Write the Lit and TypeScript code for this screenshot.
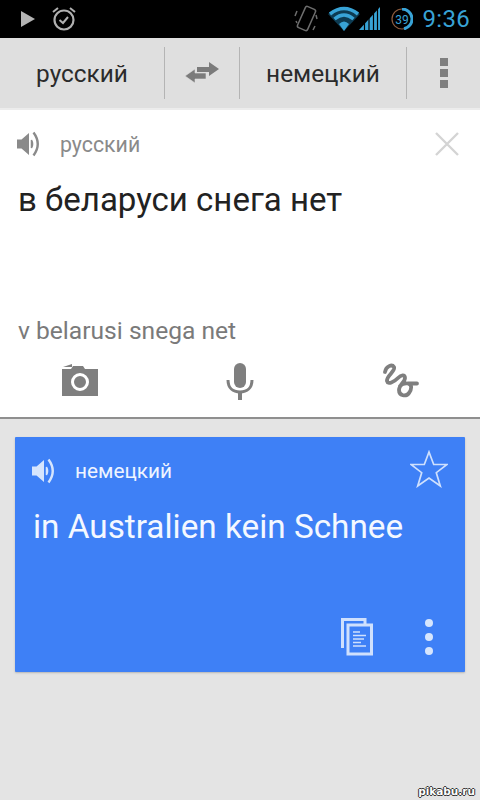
import { LitElement, html, css, svg } from "lit";
import { customElement } from "lit/decorators.js";

const speaker = (c: string) => svg`<svg class="spk" width="26" height="26" viewBox="0 0 26 26"><path d="M1 8.500h4.500L13 2v22l-7.500-6.500H1z" fill="${c}"/><path d="M15.500 9q2.200 4 0 8z" fill="${c}" stroke="${c}" stroke-width="1.500"/><path d="M17.500 1.500q8.500 11.500 0 23" fill="none" stroke="${c}" stroke-width="2.400"/></svg>`;

@customElement("app-root")
export class AppRoot extends LitElement {
  static styles = css`
    :host { display: block; width: 480px; height: 800px; position: relative; overflow: hidden; background: #e4e4e4; font-family: Roboto, "Noto Sans", sans-serif; }
    svg { display: block; flex: none; }
    .status { height: 38px; background: #000; display: flex; align-items: center; padding: 0 10px 0 20px; }
    .status .right { margin-left: auto; display: flex; align-items: center; }
    .clock { color: #38a3d6; font-size: 24px; font-family: Roboto, sans-serif; margin-left: 10px; letter-spacing: .3px; }
    .toolbar { height: 70px; background: #dfdfdf; display: grid; grid-template-columns: 165px 75px 167px 73px; align-items: center; border-bottom: 2px solid #ececec; }
    .tb { height: 52px; display: flex; align-items: center; justify-content: center; border-right: 1px solid #b4b4b4; color: #2b2b2b; font-size: 24.400px; }
    .tb.last { border-right: none; }
    .input { height: 307px; background: #fff; border-bottom: 2px solid #8f8f8f; display: flex; flex-direction: column; padding: 0 18px; box-sizing: content-box; position: relative; }
    .langrow { display: flex; align-items: center; height: 26px; margin-top: 21px; margin-left: -2px; }
    .lang { font-size: 21.300px; color: #8a8a8a; margin-left: 18px; }
    .close { margin-left: auto; margin-right: 2px; }
    .src { font-size: 33px; color: #222; line-height: 38px; margin-top: 24px; }
    .trans { font-size: 24.600px; color: #7a7a7a; line-height: 28px; margin-top: 98px; }
    .tools { display: grid; grid-template-columns: repeat(3, 1fr); margin: 18px -18px 0; justify-items: center; }
    .card { margin: 18px 15px 0; height: 235px; background: #3e80f6; border-radius: 1px; box-shadow: 0 1px 2px #b5b5b5; color: #fff; padding: 0 18px; box-sizing: border-box; display: flex; flex-direction: column; }
    .card .langrow { margin-top: 21px; margin-left: -2px; }
    .card .lang { color: #eef4ff; font-size: 20.800px; margin-left: 18px; }
    .star { margin-left: auto; margin-right: -1px; margin-top: -4px; }
    .dst { font-size: 33.300px; line-height: 38px; margin-top: 24px; color: #f4f8ff; }
    .actions { margin-top: auto; margin-bottom: 16px; display: flex; justify-content: flex-end; align-items: center; gap: 52px; margin-right: 14px; }
    .dots { display: flex; flex-direction: column; gap: 6px; }
    .dots i { width: 8px; height: 8px; border-radius: 50%; background: #d6e5fd; display: block; }
    .mark { position: absolute; right: 5px; bottom: 3px; color: #fff; font-family: "DejaVu Sans", sans-serif; font-size: 10.500px; font-weight: bold; text-shadow: -1px 0 #333, 1px 0 #333, 0 -1px #333, 0 1px #333; }
  `;

  render() {
    return html`
      <div class="status">
        <svg width="16" height="18" viewBox="0 0 16 18"><path d="M1 1l14 8-14 8z" fill="#b4b4b4"/></svg>
        <svg style="margin-left:15px" width="26" height="26" viewBox="0 0 26 26" fill="none" stroke="#b0b0b0"><circle cx="13" cy="14" r="9.500" stroke-width="2.200"/><path d="M8.500 14l3.500 3 5-6" stroke-width="2"/><path d="M2 6l5-4M24 6l-5-4" stroke-width="2"/></svg>
        <div class="right">
          <svg width="24" height="32" viewBox="0 0 24 32" fill="none" stroke="#6e6e6e" stroke-width="1.500"><rect x="7" y="4" width="11" height="23" rx="2" transform="rotate(24 12.500 15.500)"/><path d="M3 8l-2 5M2 18l1 2M22 12l1 4M19 27l2-4"/></svg>
          <svg style="margin-left:10px" width="32" height="26" viewBox="0 0 32 26"><path d="M0 8Q16-5 32 8L16 25z" fill="#0d3b52"/><path d="M2 8Q16-3 30 8" fill="none" stroke="#38a3d6" stroke-width="3.500"/><path d="M6.500 13Q16 5 25.500 13" fill="none" stroke="#38a3d6" stroke-width="3.500"/><path d="M11 18Q16 13 21 18L16 25z" fill="#38a3d6"/></svg>
          <svg width="22" height="26" viewBox="0 0 22 26" style="margin-left:-1px"><path d="M0 24L21 1v23z" fill="#38a3d6"/><path d="M5.500 24v-8M10 24V10M14.500 24V5M18.500 24V2" stroke="#000" stroke-width="1.200"/></svg>
          <svg style="margin-left:10px" width="22" height="22" viewBox="0 0 22 22"><circle cx="11" cy="11" r="10" fill="none" stroke="#8b5b3e" stroke-width="1.200"/><path d="M11 1a10 10 0 0 1 2 19.800" fill="none" stroke="#38a3d6" stroke-width="3"/><text x="11" y="15.500" text-anchor="middle" font-size="12" fill="#38a3d6" font-family="Roboto">39</text></svg>
          <span class="clock">9:36</span>
        </div>
      </div>
      <div class="toolbar">
        <div class="tb">русский</div>
        <div class="tb"><svg width="36" height="24" viewBox="0 0 36 24"><path d="M13 6h12V1l10 7-10 7v-4H13z" fill="#7b7b7b"/><path d="M22 12H11V8L1 15l10 7v-4h11z" fill="#7b7b7b" stroke="#dfdfdf" stroke-width=".6"/></svg></div>
        <div class="tb">немецкий</div>
        <div class="tb last"><svg width="8" height="30" viewBox="0 0 8 30" fill="#7f7f7f"><rect width="8" height="8"/><rect y="11" width="8" height="8"/><rect y="22" width="8" height="8"/></svg></div>
      </div>
      <div class="input">
        <div class="langrow">
          ${speaker("#8a8a8a")}
          <span class="lang">русский</span>
          <svg class="close" width="26" height="26" viewBox="0 0 26 26"><path d="M2 2l22 22M24 2L2 24" stroke="#d4d4d4" stroke-width="2.400"/></svg>
        </div>
        <div class="src">в беларуси снега нет</div>
        <div class="trans">v belarusi snega net</div>
        <div class="tools">
          <svg width="38" height="34" viewBox="0 0 38 34"><path d="M2 4l9-3v3z" fill="#7f7f7f"/><path d="M1 6h9l2-3h10l2 3h13v27H1z" fill="#7f7f7f"/><circle cx="19" cy="19" r="7.500" fill="none" stroke="#fff" stroke-width="3"/></svg>
          <svg width="28" height="37" viewBox="0 0 28 37"><rect x="8" y="0" width="12" height="25" rx="6" fill="#7f7f7f"/><path d="M2 17c0 8 5 12 12 12s12-4 12-12" fill="none" stroke="#7f7f7f" stroke-width="3"/><rect x="12" y="28" width="4" height="9" fill="#7f7f7f"/></svg>
          <svg width="38" height="36" viewBox="0 0 38 36"><path d="M4 9C5 3 11 1 13 4 15 8 5 13 6 18 7 22 13 19 17 15 20 12 24 11 24 15 24 19 18 22 18 27 18 33 25 34 28 30 31 26 31 21 27 20.500 24 20 21 21 19 23M27 20.500H36" fill="none" stroke="#7f7f7f" stroke-width="3.800" stroke-linecap="round" stroke-linejoin="round"/></svg>
        </div>
      </div>
      <div class="card">
        <div class="langrow">
          ${speaker("#d6e5fd")}
          <span class="lang">немецкий</span>
          <svg class="star" width="38" height="38" viewBox="0 0 38 38"><path d="M19 2l4.700 12.500H37l-10.700 8.200 4 13.300L19 28l-11.300 8 4-13.300L1 14.500h13.300z" fill="none" stroke="#cfe0fd" stroke-width="1.700"/></svg>
        </div>
        <div class="dst">in Australien kein Schnee</div>
        <div class="actions">
          <svg width="32" height="38" viewBox="0 0 32 38"><path d="M1.500 30V1.500H24V6" fill="none" stroke="#cfe0fd" stroke-width="3"/><rect x="7" y="7" width="23.500" height="29" fill="#3e80f6" stroke="#cfe0fd" stroke-width="3"/><path d="M12 14h7M12 17.500h13M12 21h11M12 24.500h8M12 28h13" stroke="#cfe0fd" stroke-width="1.400"/></svg>
          <div class="dots"><i></i><i></i><i></i></div>
        </div>
      </div>
      <div class="mark">pikabu.ru</div>
    `;
  }
}
